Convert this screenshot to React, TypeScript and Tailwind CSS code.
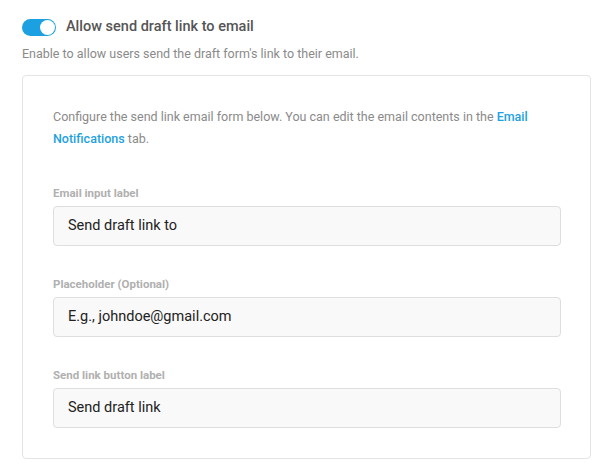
// Send draft link settings panel

import { useState } from 'react';

type FieldProps = {
  label: string;
  value: string;
};

function Field({ label, value }: FieldProps) {
  return (
    <div className="flex flex-col">
      <label className="text-[11.5px] leading-4 font-bold text-[#b0b0b0] mb-[5px]">{label}</label>
      <div className="h-10 w-[508px] flex items-center px-[14px] bg-[#f9f9f9] border border-[#dedede] rounded-[4px] text-[14.5px] text-[#222]">
        {value}
      </div>
    </div>
  );
}

export default function App() {
  const [enabled, setEnabled] = useState(true);

  return (
    <div className="w-[610px] h-[474px] bg-white pl-[22px] pt-[17px] font-['Roboto',sans-serif]">
      {/* Toggle header */}
      <div className="flex items-center h-5">
        <button
          onClick={() => setEnabled(v => !v)}
          className={`relative w-[34px] h-[17px] rounded-full transition ${
            enabled ? 'bg-[#1ba1e2]' : 'bg-gray-300'
          }`}
        >
          <span
            className={`absolute top-[1px] w-[15px] h-[15px] rounded-full bg-white transition ${
              enabled ? 'left-[18px]' : 'left-[1px]'
            }`}
          />
        </button>
        <span className="ml-[10px] text-[14.5px] font-medium text-[#555]">Allow send draft link to email</span>
      </div>
      <p className="mt-2 text-[12.5px] leading-[18px] text-[#8a8a8a]">
        Enable to allow users send the draft form's link to their email.
      </p>

      {/* Card */}
      <div className="mt-3 w-[569px] border border-[#e4e4e4] rounded-[4px] pt-[30px] pb-[30px] px-[30px]">
        <p className="text-[12.5px] leading-[22px] text-[#8a8a8a]">
          Configure the send link email form below. You can edit the email contents in the{' '}
          <a className="text-[#1ea1e1] font-medium">Email Notifications</a> tab.
        </p>
        <div className="mt-[35px] flex flex-col gap-[30px]">
          <Field label="Email input label" value="Send draft link to" />
          <Field label="Placeholder (Optional)" value="E.g., johndoe@gmail.com" />
          <Field label="Send link button label" value="Send draft link" />
        </div>
      </div>
    </div>
  );
}
